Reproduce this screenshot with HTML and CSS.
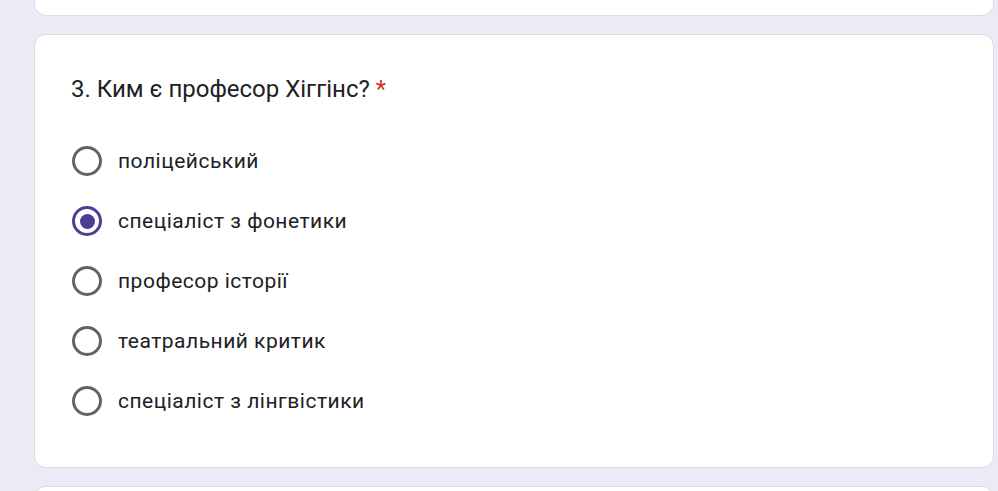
FILE: index.html
```html
<!DOCTYPE html>
<html lang="uk">
<head>
<meta charset="utf-8">
<title>Питання</title>
<link rel="stylesheet" href="styles.css">
</head>
<body>
<div class="page">
  <div class="card card-prev"></div>
  <div class="card question">
    <div class="title">3. Ким є професор Хіггінс?<span class="req">*</span></div>
    <div class="options">
      <label class="option"><span class="radio"></span><span class="label">поліцейський</span></label>
      <label class="option"><span class="radio checked"></span><span class="label">спеціаліст з фонетики</span></label>
      <label class="option"><span class="radio"></span><span class="label">професор історії</span></label>
      <label class="option"><span class="radio"></span><span class="label">театральний критик</span></label>
      <label class="option"><span class="radio"></span><span class="label">спеціаліст з лінгвістики</span></label>
    </div>
  </div>
  <div class="card card-next"></div>
</div>
</body>
</html>
```
FILE: styles.css
```css
html, body {
  margin: 0;
  padding: 0;
  height: 100%;
  overflow: hidden;
}
body {
  background: #ebebf5;
  font-family: Roboto, "Noto Sans", Arial, sans-serif;
  color: #202124;
}
.page {
  width: 960px;
  margin-left: 34px;
  display: flex;
  flex-direction: column;
  gap: 18px;
}
.card {
  background: #fff;
  border: 1px solid #dadce0;
  border-radius: 12px;
  box-sizing: border-box;
}
.card-prev {
  height: 116px;
  margin-top: -100px;
}
.card-next {
  height: 40px;
}
.question {
  height: 434px;
  padding: 36px 36px 36px 36px;
}
.title {
  font-size: 24px;
  line-height: 36px;
  letter-spacing: 0;
}
.req {
  color: #d93025;
  margin-left: 6px;
}
.options {
  margin-top: 24px;
  display: flex;
  flex-direction: column;
}
.option {
  height: 60px;
  display: flex;
  align-items: center;
  gap: 16px;
}
.radio {
  width: 30px;
  height: 30px;
  box-sizing: border-box;
  border: 3px solid #5f6368;
  border-radius: 50%;
  margin-left: 1px;
  display: flex;
  align-items: center;
  justify-content: center;
  flex: none;
}
.radio.checked {
  border-color: #4a3f94;
}
.radio.checked::after {
  content: "";
  width: 15px;
  height: 15px;
  border-radius: 50%;
  background: #4a3f94;
}
.label {
  font-size: 21px;
  line-height: 30px;
  letter-spacing: 0.5px;
}
```
